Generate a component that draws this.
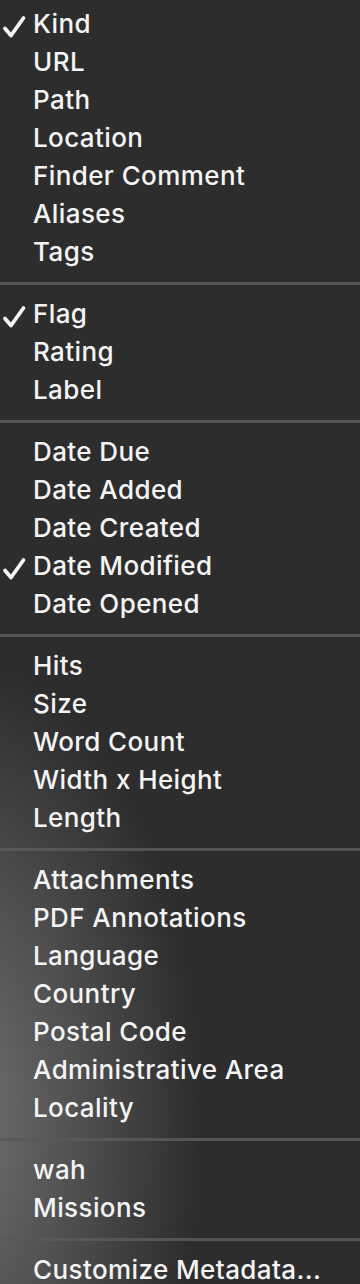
import React from 'react';

type Item = { label: string; checked?: boolean };

const GROUPS: Item[][] = [
  [
    { label: 'Kind', checked: true },
    { label: 'URL' },
    { label: 'Path' },
    { label: 'Location' },
    { label: 'Finder Comment' },
    { label: 'Aliases' },
    { label: 'Tags' },
  ],
  [{ label: 'Flag', checked: true }, { label: 'Rating' }, { label: 'Label' }],
  [
    { label: 'Date Due' },
    { label: 'Date Added' },
    { label: 'Date Created' },
    { label: 'Date Modified', checked: true },
    { label: 'Date Opened' },
  ],
  [
    { label: 'Hits' },
    { label: 'Size' },
    { label: 'Word Count' },
    { label: 'Width x Height' },
    { label: 'Length' },
  ],
  [
    { label: 'Attachments' },
    { label: 'PDF Annotations' },
    { label: 'Language' },
    { label: 'Country' },
    { label: 'Postal Code' },
    { label: 'Administrative Area' },
    { label: 'Locality' },
  ],
  [{ label: 'wah' }, { label: 'Missions' }],
  [{ label: 'Customize Metadata...' }],
];

function Check() {
  return (
    <svg width="26" height="24" viewBox="0 0 26 24" className="absolute left-[1px] top-[10px]">
      <path d="M4 13.5 L10 20.5 L22.5 3" fill="none" stroke="#f4f4f4" strokeWidth="3.8" strokeLinecap="round" strokeLinejoin="round" />
    </svg>
  );
}

export default function App() {
  return (
    <div
      className="w-[360px] h-[1284px] overflow-hidden bg-[#2d2d2d] pt-[5px] text-[#f4f4f4]"
      style={{
        fontFamily: 'Inter, "Noto Sans", sans-serif',
        backgroundImage:
          'radial-gradient(ellipse 250px 460px at -50px 1120px, rgba(140,140,140,0.75), rgba(45,45,45,0) 100%)',
      }}
    >
      {GROUPS.map((group, gi) => (
        <div key={gi}>
          {gi > 0 && (
            <div className="pt-[11px] pb-[10px]">
              <div className="h-[3px] bg-[#595959]/90" />
            </div>
          )}
          {group.map((item) => (
            <div key={item.label} className="relative h-[38px] pl-[33px] text-[26px] font-medium leading-[38px] tracking-[0.4px]">
              {item.checked && <Check />}
              {item.label}
            </div>
          ))}
        </div>
      ))}
    </div>
  );
}
